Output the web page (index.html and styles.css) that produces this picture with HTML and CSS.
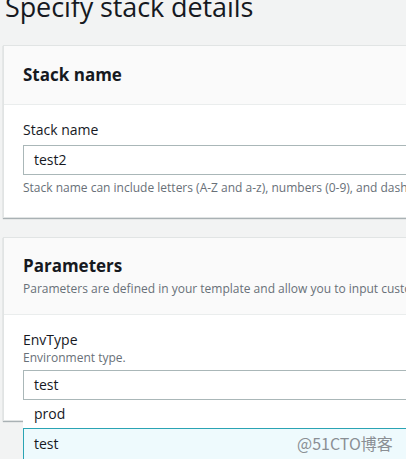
FILE: index.html
```html
<!DOCTYPE html>
<html>
<head>
<meta charset="utf-8">
<link rel="stylesheet" href="styles.css">
</head>
<body>
<h1 class="page-title">Specify stack details</h1>
<section class="card">
  <div class="card-header">
    <h2 class="card-title">Stack name</h2>
  </div>
  <div class="card-body">
    <label class="field-label">Stack name</label>
    <div class="input">test2</div>
    <p class="hint">Stack name can include letters (A-Z and a-z), numbers (0-9), and dashes (-).</p>
  </div>
</section>
<section class="card card-params">
  <div class="card-header">
    <h2 class="card-title">Parameters</h2>
    <p class="card-desc">Parameters are defined in your template and allow you to input custom values when you create or update a stack.</p>
  </div>
  <div class="card-body">
    <label class="field-label">EnvType</label>
    <p class="field-desc">Environment type.</p>
    <div class="select-wrap">
      <div class="input">test</div>
      <ul class="dropdown">
        <li class="option">prod</li>
        <li class="option option-active">test</li>
      </ul>
    </div>
  </div>
</section>
<div class="watermark">@51CTO博客</div>
</body>
</html>
```
FILE: styles.css
```css
* { box-sizing: border-box; }
html, body { margin: 0; padding: 0; }
body {
  background: #f2f3f3;
  font-family: "Open Sans", "Noto Sans", sans-serif;
  color: #16191f;
  width: 406px;
  height: 459px;
  overflow: hidden;
  position: relative;
}
.page-title {
  margin: -10px 0 0 5px;
  font-size: 27px;
  font-weight: 400;
  line-height: 34px;
  letter-spacing: -0.1px;
  white-space: nowrap;
}
.card {
  margin: 21px 0 0 3px;
  width: 440px;
  background: #fff;
  border: 1px solid #e1e4e4;
  border-right: none;
  box-shadow: 0 1px 1px 0 rgba(0,28,36,0.3);
}
.card-params { margin-top: 19px; }
.card-header {
  background: #fafafa;
  border-bottom: 1px solid #eaeded;
  padding: 17px 19px 17px;
}
.card-title {
  margin: 0;
  font-size: 17px;
  font-weight: 700;
  line-height: 24px;
}
.card-desc {
  margin: 2px 0 0;
  font-size: 12px;
  line-height: 17px;
  color: #687078;
  white-space: nowrap;
}
.card-params .card-header { padding: 16px 19px 17px; }
.card-body {
  padding: 15px 19px 21px;
}
.card-params .card-body { padding-bottom: 20px; }
.field-label {
  display: block;
  font-size: 14px;
  line-height: 20px;
  margin-bottom: 5px;
}
.field-desc {
  margin: -6px 0 4px;
  font-size: 12px;
  line-height: 17px;
  color: #687078;
}
.input {
  height: 30px;
  border: 1px solid #aab7b8;
  padding: 0 10px;
  font-size: 14px;
  line-height: 28px;
  background: #fff;
}
.hint {
  margin: 4px 0 0;
  font-size: 12px;
  line-height: 17px;
  color: #687078;
  white-space: nowrap;
}
.select-wrap { position: relative; }
.dropdown {
  position: absolute;
  left: 0;
  right: 0;
  top: 30px;
  margin: 0;
  padding: 0;
  list-style: none;
  background: #fff;
  z-index: 2;
}
.option {
  height: 28px;
  padding: 0 10px;
  font-size: 14px;
  line-height: 26px;
  border: 1px solid transparent;
}
.option-active {
  height: 32px;
  line-height: 29px;
  background: #eefafd;
  border-color: #2aa4b4;
}
.watermark {
  position: absolute;
  left: 297px;
  top: 431px;
  font-size: 16px;
  color: #8a8f94;
  font-family: "Noto Sans CJK SC", sans-serif;
  z-index: 3;
}
```
